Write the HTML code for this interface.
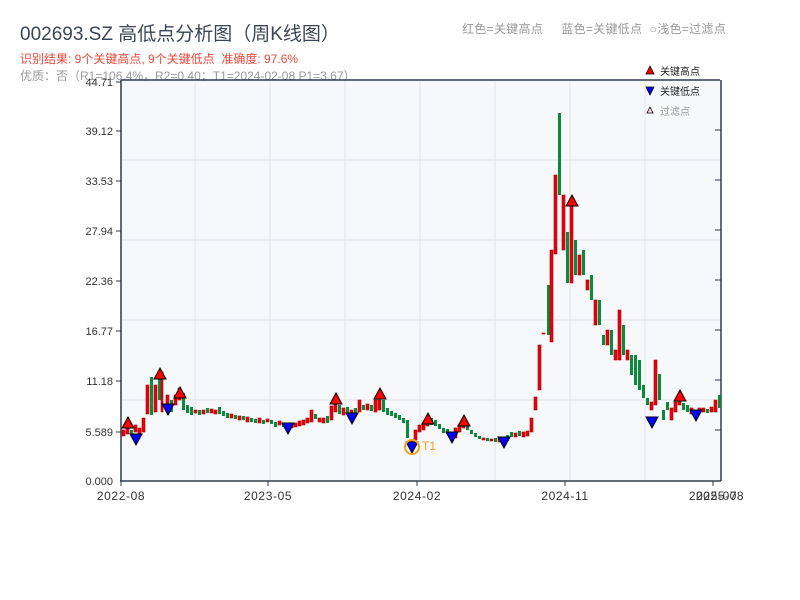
<!DOCTYPE html>
<html><head><meta charset="utf-8"><style>
body{margin:0;width:800px;height:600px;background:#fff;overflow:hidden;font-family:"Liberation Sans","Noto Sans CJK SC",sans-serif;}
svg{position:absolute;left:0;top:0}
.r{fill:#e60012;stroke:#a00;stroke-width:0.6}
.g{fill:#0a8a3a}
.ax{font-size:11px;fill:#333}
</style></head><body>
<svg width="800" height="600" xmlns="http://www.w3.org/2000/svg" font-family="Liberation Sans, Noto Sans CJK SC, sans-serif">
<text x="20" y="40" font-size="19" fill="#3a4656">002693.SZ 高低点分析图（周K线图）</text>
<text x="20" y="63" font-size="12" fill="#e8483b">识别结果: 9个关键高点, 9个关键低点&#160;&#160;准确度: 97.6%</text>
<text x="20" y="80" font-size="12" fill="#999">优质：否（R1=106.4%，R2=0.40；T1=2024-02-08 P1=3.67）</text>
<text x="462" y="33" font-size="12" fill="#999" letter-spacing="0.3">红色=关键高点&#160;&#160;&#160;&#160;&#160;蓝色=关键低点&#160;&#160;○浅色=过滤点</text>
<rect x="121" y="81" width="599" height="399" fill="#f6f8fa"/>
<g stroke="#e2e5ea" stroke-width="1">
<line x1="195" y1="81" x2="195" y2="480"/><line x1="270" y1="81" x2="270" y2="480"/><line x1="345" y1="81" x2="345" y2="480"/><line x1="420" y1="81" x2="420" y2="480"/><line x1="495" y1="81" x2="495" y2="480"/><line x1="570" y1="81" x2="570" y2="480"/><line x1="645" y1="81" x2="645" y2="480"/>
<line x1="121" y1="160" x2="720" y2="160"/><line x1="121" y1="240" x2="720" y2="240"/><line x1="121" y1="320" x2="720" y2="320"/><line x1="121" y1="400" x2="720" y2="400"/>
</g>
<g stroke="#2e3a4a" stroke-width="1.5" fill="none">
<line x1="121" y1="80" x2="720" y2="80"/><line x1="121" y1="80" x2="121" y2="481"/><line x1="120" y1="481" x2="721" y2="481"/><line x1="721" y1="80" x2="721" y2="481"/>
</g>
<g stroke="#2e3a4a" stroke-width="1">
<line x1="116" y1="82" x2="121" y2="82"/><line x1="116" y1="131" x2="121" y2="131"/><line x1="116" y1="181" x2="121" y2="181"/><line x1="116" y1="231" x2="121" y2="231"/><line x1="116" y1="281" x2="121" y2="281"/><line x1="116" y1="331" x2="121" y2="331"/><line x1="116" y1="381" x2="121" y2="381"/><line x1="116" y1="432" x2="121" y2="432"/>
<line x1="715" y1="130" x2="721" y2="130"/><line x1="715" y1="180" x2="721" y2="180"/><line x1="715" y1="230" x2="721" y2="230"/><line x1="715" y1="280" x2="721" y2="280"/><line x1="715" y1="330" x2="721" y2="330"/><line x1="715" y1="380" x2="721" y2="380"/><line x1="715" y1="430" x2="721" y2="430"/>
<line x1="121" y1="481" x2="121" y2="486"/><line x1="268" y1="481" x2="268" y2="486"/><line x1="417" y1="481" x2="417" y2="486"/><line x1="565" y1="481" x2="565" y2="486"/><line x1="713" y1="481" x2="713" y2="486"/>
</g>
<g class="ax" text-anchor="end">
<text x="113" y="86">44.71</text><text x="113" y="135">39.12</text><text x="113" y="185">33.53</text><text x="113" y="235">27.94</text><text x="113" y="285">22.36</text><text x="113" y="335">16.77</text><text x="113" y="385">11.18</text><text x="113" y="436">5.589</text><text x="113" y="485">0.000</text>
</g>
<g class="ax" text-anchor="middle" style="font-size:12px" letter-spacing="0.6">
<text x="121" y="500">2022-08</text><text x="268" y="500">2023-05</text><text x="417" y="500">2024-02</text><text x="565" y="500">2024-11</text><text x="713" y="500">2025-07</text><text x="720" y="500">2025-08</text>
</g>
<g>
<rect class="r" x="122" y="430" width="3" height="6"/><rect class="r" x="126" y="428" width="3" height="6"/><rect class="g" x="130" y="430" width="3" height="5"/><rect class="r" x="134" y="425" width="3" height="7"/><rect class="r" x="138" y="428" width="3" height="6"/><rect class="r" x="142" y="418" width="3" height="14"/><rect class="r" x="146" y="385" width="3" height="29"/><rect class="g" x="150" y="377" width="3" height="38"/><rect class="r" x="154" y="385" width="3" height="27"/><rect class="g" x="158" y="378" width="3" height="22"/><rect class="r" x="161" y="372" width="2" height="40"/><rect class="r" x="166" y="395" width="3" height="15"/><rect class="g" x="170" y="400" width="3" height="12"/><rect class="r" x="174" y="395" width="3" height="10"/><rect class="r" x="178" y="388" width="3" height="12"/><rect class="g" x="182" y="393" width="3" height="17"/><rect class="g" x="186" y="405" width="3" height="8"/><rect class="g" x="190" y="407" width="3" height="8"/><rect class="r" x="194" y="410" width="3" height="3"/><rect class="g" x="198" y="410" width="3" height="5"/><rect class="r" x="202" y="410" width="3" height="4"/><rect class="g" x="206" y="408" width="3" height="5"/><rect class="r" x="210" y="409" width="3" height="4"/><rect class="r" x="214" y="410" width="3" height="4"/><rect class="g" x="218" y="407" width="3" height="7"/><rect class="g" x="222" y="411" width="3" height="5"/><rect class="g" x="226" y="413" width="3" height="5"/><rect class="r" x="230" y="414" width="3" height="4"/><rect class="g" x="234" y="415" width="3" height="4"/><rect class="r" x="238" y="416" width="3" height="4"/><rect class="g" x="242" y="416" width="3" height="4"/><rect class="r" x="246" y="417" width="3" height="5"/><rect class="g" x="250" y="418" width="3" height="4"/><rect class="g" x="254" y="419" width="3" height="4"/><rect class="r" x="258" y="418" width="3" height="5"/><rect class="g" x="262" y="420" width="3" height="4"/><rect class="r" x="266" y="419" width="3" height="3"/><rect class="g" x="270" y="420" width="3" height="4"/><rect class="g" x="274" y="422" width="3" height="5"/><rect class="r" x="278" y="421" width="3" height="4"/><rect class="g" x="282" y="423" width="3" height="4"/><rect class="g" x="286" y="424" width="3" height="6"/><rect class="r" x="290" y="424" width="3" height="4"/><rect class="r" x="294" y="423" width="3" height="4"/><rect class="r" x="298" y="421" width="3" height="5"/><rect class="r" x="302" y="420" width="3" height="5"/><rect class="r" x="306" y="418" width="3" height="5"/><rect class="r" x="310" y="410" width="3" height="12"/><rect class="g" x="314" y="414" width="3" height="5"/><rect class="r" x="318" y="418" width="3" height="4"/><rect class="r" x="322" y="418" width="3" height="5"/><rect class="g" x="326" y="416" width="3" height="7"/><rect class="r" x="330" y="406" width="3" height="14"/><rect class="r" x="334" y="400" width="3" height="12"/><rect class="g" x="338" y="405" width="3" height="9"/><rect class="r" x="342" y="408" width="3" height="7"/><rect class="g" x="346" y="407" width="3" height="6"/><rect class="r" x="350" y="410" width="3" height="6"/><rect class="g" x="354" y="408" width="3" height="5"/><rect class="r" x="358" y="400" width="3" height="12"/><rect class="g" x="362" y="405" width="3" height="5"/><rect class="r" x="366" y="404" width="3" height="6"/><rect class="g" x="370" y="405" width="3" height="6"/><rect class="r" x="374" y="400" width="3" height="12"/><rect class="r" x="378" y="400" width="3" height="10"/><rect class="g" x="382" y="400" width="3" height="12"/><rect class="g" x="386" y="408" width="3" height="7"/><rect class="g" x="390" y="411" width="3" height="5"/><rect class="g" x="394" y="413" width="3" height="5"/><rect class="g" x="398" y="415" width="3" height="5"/><rect class="g" x="402" y="418" width="3" height="5"/><rect class="g" x="406" y="420" width="3" height="18"/><rect class="r" x="410" y="440" width="3" height="8"/><rect class="r" x="414" y="430" width="3" height="10"/><rect class="r" x="418" y="425" width="3" height="7"/><rect class="r" x="422" y="423" width="3" height="7"/><rect class="r" x="426" y="420" width="3" height="6"/><rect class="g" x="430" y="418" width="3" height="7"/><rect class="g" x="434" y="420" width="3" height="6"/><rect class="g" x="438" y="424" width="3" height="5"/><rect class="g" x="442" y="428" width="3" height="5"/><rect class="g" x="446" y="429" width="3" height="5"/><rect class="g" x="450" y="432" width="3" height="5"/><rect class="r" x="454" y="428" width="3" height="10"/><rect class="r" x="458" y="425" width="3" height="7"/><rect class="r" x="462" y="421" width="3" height="7"/><rect class="g" x="466" y="425" width="3" height="5"/><rect class="g" x="470" y="430" width="3" height="4"/><rect class="g" x="474" y="433" width="3" height="4"/><rect class="g" x="478" y="436" width="3" height="3"/><rect class="r" x="482" y="438" width="3" height="2"/><rect class="g" x="486" y="438" width="3" height="3"/><rect class="r" x="490" y="439" width="3" height="2"/><rect class="g" x="494" y="438" width="3" height="4"/><rect class="r" x="498" y="438" width="3" height="4"/><rect class="r" x="502" y="437" width="3" height="4"/><rect class="g" x="506" y="435" width="3" height="6"/><rect class="g" x="510" y="432" width="3" height="5"/><rect class="r" x="514" y="433" width="3" height="4"/><rect class="g" x="518" y="431" width="3" height="5"/><rect class="r" x="522" y="432" width="3" height="5"/><rect class="r" x="526" y="431" width="3" height="5"/><rect class="r" x="530" y="418" width="3" height="14"/><rect class="r" x="534" y="397" width="3" height="13"/><rect class="r" x="538" y="345" width="3" height="45"/><rect class="r" x="542" y="333" width="3" height="1"/><rect class="g" x="547" y="285" width="3" height="50"/><rect class="r" x="550" y="250" width="3" height="92"/><rect class="r" x="554" y="175" width="3" height="79"/><rect class="g" x="558" y="113" width="3" height="82"/><rect class="r" x="562" y="195" width="3" height="55"/><rect class="g" x="566" y="232" width="3" height="51"/><rect class="r" x="570" y="205" width="3" height="78"/><rect class="g" x="574" y="240" width="3" height="35"/><rect class="r" x="578" y="255" width="3" height="20"/><rect class="g" x="582" y="250" width="3" height="25"/><rect class="r" x="586" y="280" width="3" height="10"/><rect class="g" x="590" y="275" width="3" height="25"/><rect class="r" x="594" y="300" width="3" height="25"/><rect class="g" x="598" y="300" width="3" height="25"/><rect class="g" x="602" y="335" width="3" height="10"/><rect class="r" x="606" y="330" width="3" height="15"/><rect class="g" x="610" y="330" width="3" height="25"/><rect class="r" x="614" y="350" width="3" height="10"/><rect class="r" x="618" y="310" width="3" height="50"/><rect class="g" x="622" y="325" width="3" height="30"/><rect class="r" x="626" y="350" width="3" height="10"/><rect class="g" x="630" y="355" width="3" height="20"/><rect class="g" x="634" y="355" width="3" height="30"/><rect class="g" x="638" y="360" width="3" height="30"/><rect class="g" x="642" y="385" width="3" height="13"/><rect class="g" x="646" y="398" width="3" height="7"/><rect class="r" x="650" y="402" width="3" height="8"/><rect class="r" x="654" y="360" width="3" height="45"/><rect class="g" x="658" y="374" width="3" height="26"/><rect class="g" x="662" y="410" width="3" height="10"/><rect class="g" x="666" y="402" width="3" height="8"/><rect class="r" x="670" y="408" width="3" height="12"/><rect class="r" x="674" y="402" width="3" height="10"/><rect class="r" x="678" y="398" width="3" height="7"/><rect class="g" x="682" y="403" width="3" height="7"/><rect class="g" x="686" y="405" width="3" height="7"/><rect class="r" x="690" y="408" width="3" height="6"/><rect class="g" x="694" y="410" width="3" height="4"/><rect class="r" x="698" y="408" width="3" height="4"/><rect class="r" x="702" y="408" width="3" height="4"/><rect class="g" x="706" y="409" width="3" height="4"/><rect class="r" x="710" y="407" width="3" height="5"/><rect class="r" x="714" y="400" width="3" height="12"/><rect class="g" x="718" y="395" width="3" height="13"/>
</g>
<g fill="#f00" stroke="#000" stroke-width="1">
<path d="M128 417 l6 11 h-12 z"/><path d="M160 368 l6 11 h-12 z"/><path d="M180 387 l6 11 h-12 z"/><path d="M336 393 l6 11 h-12 z"/><path d="M380 388 l6 11 h-12 z"/><path d="M428 413 l6 11 h-12 z"/><path d="M464 415 l6 11 h-12 z"/><path d="M572 195 l6 11 h-12 z"/><path d="M680 390 l6 11 h-12 z"/>
</g>
<g fill="#00f" stroke="#000" stroke-width="1">
<path d="M130 434 h12 l-6 11 z"/><path d="M162 404 h12 l-6 11 z"/><path d="M282 423 h12 l-6 11 z"/><path d="M346 413 h12 l-6 11 z"/><path d="M406 442 h12 l-6 11 z"/><path d="M446 432 h12 l-6 11 z"/><path d="M498 437 h12 l-6 11 z"/><path d="M646 417 h12 l-6 11 z"/><path d="M690 410 h12 l-6 11 z"/>
</g>
<circle cx="412" cy="447" r="7" fill="none" stroke="#f0a020" stroke-width="2"/>
<text x="422" y="450" font-size="12" fill="#f0a020">T1</text>
<path d="M650 66 l4 8 h-8 z" fill="#f00" stroke="#000" stroke-width="0.8"/>
<text x="660" y="75" font-size="10" fill="#222">关键高点</text>
<path d="M646 87 h8 l-4 8 z" fill="#00f" stroke="#000" stroke-width="0.8"/>
<text x="660" y="95" font-size="10" fill="#222">关键低点</text>
<path d="M650 107 l3 6 h-6 z" fill="#fdd" stroke="#000" stroke-width="0.8"/>
<text x="660" y="115" font-size="10" fill="#999">过滤点</text>
</svg>
</body></html>
